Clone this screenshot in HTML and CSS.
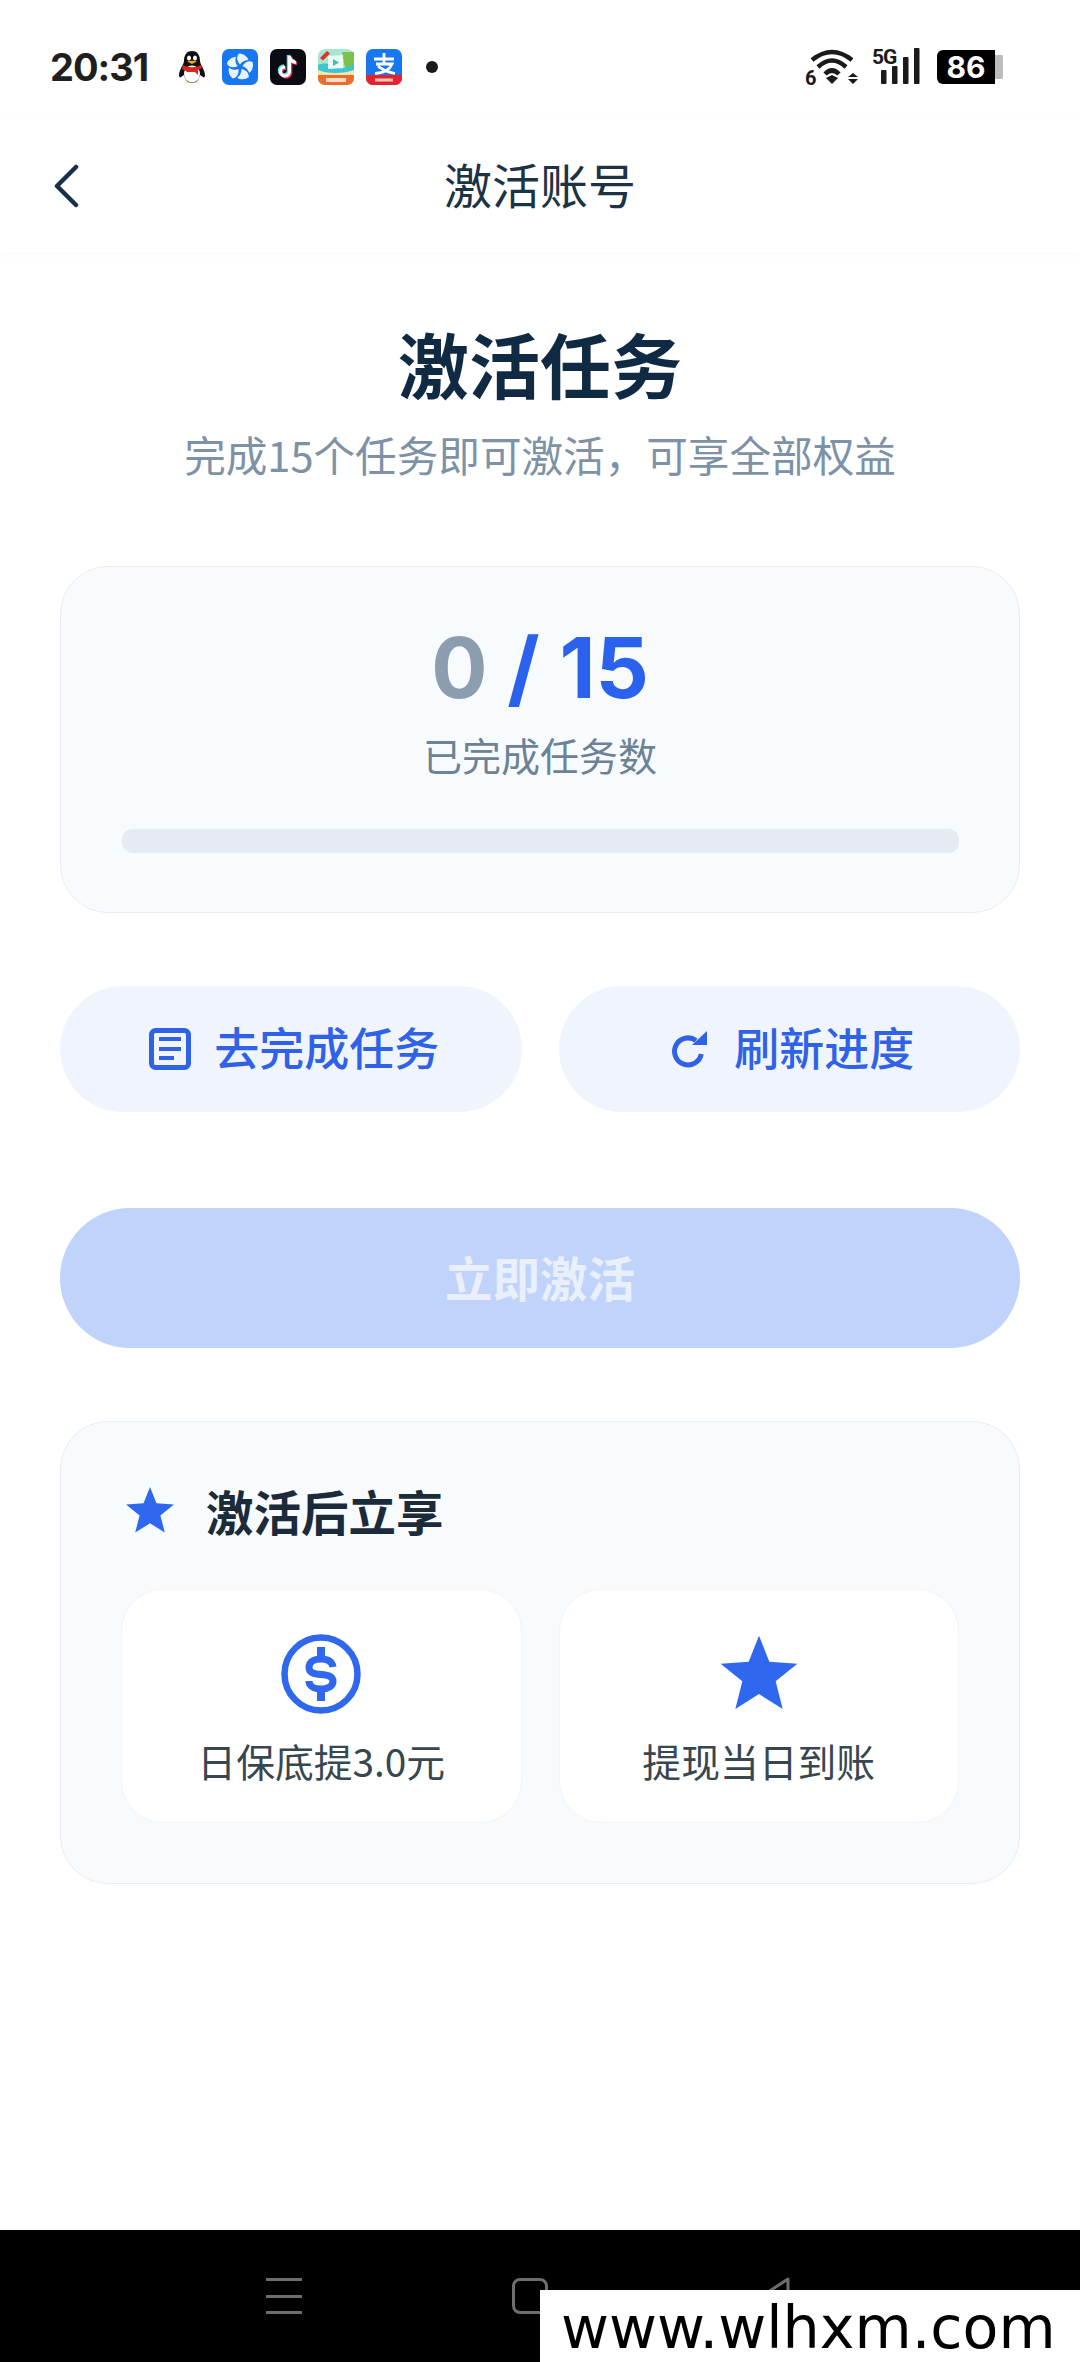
FILE: index.html
```html
<!DOCTYPE html>
<html lang="zh-CN">
<head>
  <meta charset="UTF-8">
  <meta name="viewport" content="width=device-width, initial-scale=1.0">
  <title>激活账号</title>
  <link rel="stylesheet" href="styles.css">
</head>
<body>
  <div class="screen">
    <div class="status-bar">
      <span class="clock">20:31</span>
      <div class="app-icons">
        <svg class="penguin" viewBox="0 0 28 34">
          <path d="M14 1C8 1 6 6 6 11c0 3-5 9-5 14 0 2 1 3 2 2l3-2c1 5 4 8 8 8s7-3 8-8l3 2c1 1 2 0 2-2 0-5-5-11-5-14C22 6 20 1 14 1z" fill="#111"/>
          <ellipse cx="14" cy="24" rx="8" ry="8.500" fill="#fff"/>
          <path d="M5 15c6 3 12 3 18 0l1 3-4 2v5l-3-3H9l-1-1-4-2z" fill="#d6261f"/>
          <ellipse cx="11" cy="8" rx="2" ry="2.600" fill="#fff"/>
          <ellipse cx="17" cy="8" rx="2" ry="2.600" fill="#fff"/>
          <path d="M9 11.500c3-1 7-1 10 0l-5 2.500z" fill="#f5a623"/>
          <path d="M7 33c2-1 5-1 7 0 2-1 5-1 7 0z" fill="#f5b942"/>
        </svg>
        <svg class="app-icon" viewBox="0 0 36 36">
          <rect width="36" height="36" rx="7" fill="#1677f0"/>
          <g fill="#e6f4ff">
            <path id="blade" d="M18 15.500C15 12 14 8 17 4.500c4 0 8 2.500 9.500 6.500-3.500 0-6.500 1.500-8.500 4.500z"/>
            <use href="#blade" transform="rotate(72 18 18)"/>
            <use href="#blade" transform="rotate(144 18 18)"/>
            <use href="#blade" transform="rotate(216 18 18)"/>
            <use href="#blade" transform="rotate(288 18 18)"/>
          </g>
        </svg>
        <svg class="app-icon" viewBox="0 0 36 36">
          <rect width="36" height="36" rx="7" fill="#0b0b14"/>
          <path d="M19.500 7v15.500a4.500 4.500 0 1 1-4.500-4.500M19.500 7c.5 3.500 3 6 6.500 6.500" fill="none" stroke="#ff2d55" stroke-width="3.500" transform="translate(1 1)"/>
          <path d="M19.500 7v15.500a4.500 4.500 0 1 1-4.500-4.500M19.500 7c.5 3.500 3 6 6.500 6.500" fill="none" stroke="#5fe3ea" stroke-width="3.500" transform="translate(-1 -1)"/>
          <path d="M19.500 7v15.500a4.500 4.500 0 1 1-4.500-4.500M19.500 7c.5 3.500 3 6 6.500 6.500" fill="none" stroke="#fff" stroke-width="3"/>
        </svg>
        <svg class="app-icon" viewBox="0 0 36 36">
          <rect width="36" height="36" rx="7" fill="#a9e6d2"/>
          <path d="M24 3h12v16h-9z" fill="#7cc24a"/>
          <path d="M0 16c8-3 14-1 18 2s12 1 18-3v9H0z" fill="#3fc3d6"/>
          <path d="M10 7l15-1v13l-15 1z" fill="#e8fbf5"/>
          <path d="M15 10l6 3.500-6 3.500z" fill="#45bcae"/>
          <path d="M0 21c8 4 26 4 36 0v6H0z" fill="#f8e7a0"/>
          <path d="M0 26h36v3a7 7 0 0 1-7 7H7a7 7 0 0 1-7-7z" fill="#ee6b2f"/>
          <rect x="8" y="29" width="20" height="4" fill="#ffdcc0"/>
          <path d="M2 9L9 2l3 2.500-7 7z" fill="#d8322a"/>
        </svg>
        <svg class="app-icon" viewBox="0 0 36 36">
          <rect width="36" height="36" rx="7" fill="#1677f0"/>
          <path d="M0 26h36v3a7 7 0 0 1-7 7H7a7 7 0 0 1-7-7z" fill="#e8202a"/>
          <rect x="9" y="29.500" width="18" height="3" fill="#ffc9c2"/>
          <path d="M8 10h20M18 4v10M10 15h16c-2 5-8 9-17 9.500M12 17c4 4 10 6 17 7.500" fill="none" stroke="#fff" stroke-width="2.800"/>
        </svg>
        <span class="dot"></span>
      </div>
      <div class="sys-icons">
        <div class="wifi">
          <svg class="wifi-arcs" viewBox="0 0 56 38">
            <path d="M7 12Q27-4 47 12" fill="none" stroke="#1a1a1a" stroke-width="4.500"/>
            <path d="M13 19Q27 6 41 19" fill="none" stroke="#1a1a1a" stroke-width="4.500"/>
            <path d="M20 26Q27 19 34 26" fill="none" stroke="#1a1a1a" stroke-width="4.500"/>
            <path d="M21 30l6-3 6 3-6 6z" fill="#1a1a1a"/>
            <path d="M43 29l5-4 5 4zM43 31h10l-5 5z" fill="#1a1a1a"/>
          </svg>
          <span class="wifi-six">6</span>
        </div>
        <div class="signal">
          <span class="five-g">5G</span>
          <svg class="signal-bars" viewBox="0 0 39 36">
            <rect x="0" y="22" width="5.500" height="14" rx="1"/>
            <rect x="11" y="18" width="5.500" height="18" rx="1"/>
            <rect x="22" y="9" width="5.500" height="27" rx="1"/>
            <rect x="33" y="0" width="5.500" height="36" rx="1"/>
          </svg>
        </div>
        <div class="battery">
          <span class="battery-level">86</span>
          <span class="battery-tip"></span>
        </div>
      </div>
    </div>

    <header class="nav-bar">
      <svg class="back" viewBox="0 0 26 44">
        <path d="M23 3L4 22l19 19" fill="none" stroke="#16304a" stroke-width="4.500" stroke-linecap="round" stroke-linejoin="round"/>
      </svg>
      <h2 class="nav-title">激活账号</h2>
    </header>

    <main class="content">
      <h1 class="title">激活任务</h1>
      <p class="subtitle">完成15个任务即可激活，可享全部权益</p>

      <section class="card progress-card">
        <div class="count"><span class="count-done">0</span> / 15</div>
        <div class="count-label">已完成任务数</div>
        <div class="progress-track"></div>
      </section>

      <div class="actions">
        <div class="btn-soft btn-tasks">
          <svg class="btn-icon" viewBox="0 0 42 42">
            <rect x="2.500" y="2.500" width="37" height="37" rx="4" fill="none" stroke="#2f62e6" stroke-width="5"/>
            <path d="M10 11h22M10 21h22M10 30h15" stroke="#2f62e6" stroke-width="4"/>
          </svg>
          <span>去完成任务</span>
        </div>
        <div class="btn-soft btn-refresh">
          <svg class="btn-icon refresh" viewBox="0 0 38 38">
            <path d="M25 10.500A13.500 13.500 0 1 0 30.300 24" fill="none" stroke="#2f62e6" stroke-width="5"/>
            <path d="M36 1v14H21z" fill="#2f62e6"/>
          </svg>
          <span>刷新进度</span>
        </div>
      </div>

      <div class="btn-activate">立即激活</div>

      <section class="card benefits">
        <div class="benefits-head">
          <svg class="star-small" viewBox="0 0 24 24"><path d="M12 1l3.100 7.700 8.400.6-6.500 5.300 2.100 8.200L12 18.400 4.900 22.800 7 14.600.500 9.300l8.400-.6z"/></svg>
          <span>激活后立享</span>
        </div>
        <div class="benefit-grid">
          <div class="benefit">
            <svg class="benefit-icon" viewBox="0 0 80 80">
              <circle cx="40" cy="40" r="36.500" fill="none" stroke="#2f67ef" stroke-width="6.500"/>
              <path d="M52 33C51 27 46 25 40 25 33 25 28 28 28 33.500 28 45 52 36 52 47.500 52 52 47 55 40 55 33 55 28 52 28 47" fill="none" stroke="#2f67ef" stroke-width="7"/>
              <path d="M40 13v10M40 57v10" stroke="#2f67ef" stroke-width="8"/>
            </svg>
            <span class="benefit-text">日保底提3.0元</span>
          </div>
          <div class="benefit">
            <svg class="benefit-icon" viewBox="0 0 24 24"><path d="M12 .500l3.100 7.800 8.400.6-6.500 5.300 2.100 8.300L12 18l-7.100 4.500L7 14.200.500 8.900l8.400-.6z"/></svg>
            <span class="benefit-text">提现当日到账</span>
          </div>
        </div>
      </section>
    </main>

    <nav class="sys-nav">
      <div class="nav-menu"><span></span><span></span><span></span></div>
      <span class="nav-home"></span>
      <svg class="nav-back" viewBox="0 0 34 40"><path d="M30 3L4 20l26 17z" fill="none" stroke="#6e6e6e" stroke-width="3" stroke-linejoin="round"/></svg>
    </nav>

    <div class="watermark">www.wlhxm.com</div>
  </div>
</body>
</html>
```

FILE: styles.css
```css
html, body {
  margin: 0;
  padding: 0;
  background-color: #fff;
  font-family: "Noto Sans CJK SC", "Noto Sans", sans-serif;
}

.screen {
  position: relative;
  width: 1080px;
  height: 2362px;
  overflow: hidden;
  display: flex;
  flex-direction: column;
}

/* status bar */
.status-bar {
  height: 120px;
  flex-shrink: 0;
  display: flex;
  align-items: flex-start;
  padding: 48px 0 0 50px;
  box-sizing: border-box;
}

.clock {
  width: 122px;
  font-family: Inter, sans-serif;
  font-size: 38px;
  font-weight: 700;
  line-height: 38px;
  color: #1f1f1f;
  letter-spacing: -1px;
}

.app-icons {
  display: flex;
  align-items: center;
  height: 37px;
  gap: 12px;
}

.penguin {
  width: 28px;
  height: 34px;
  margin: 0 4px 0 6px;
}

.app-icon {
  width: 36px;
  height: 36px;
}

.dot {
  width: 12px;
  height: 12px;
  margin-left: 12px;
  border-radius: 50%;
  background-color: #1a1a1a;
}

.sys-icons {
  margin-left: auto;
  margin-right: 77px;
  display: flex;
  align-items: flex-start;
}

.wifi {
  position: relative;
  width: 56px;
  height: 38px;
}

.wifi-arcs {
  display: block;
  width: 56px;
  height: 38px;
}

.wifi-six {
  position: absolute;
  left: 0;
  top: 21px;
  font-family: Roboto, sans-serif;
  font-size: 20px;
  font-weight: 700;
  line-height: 19px;
  color: #1a1a1a;
}

.signal {
  position: relative;
  width: 48px;
  height: 36px;
  margin-left: 11px;
  display: flex;
  justify-content: flex-end;
}

.five-g {
  position: absolute;
  left: 0;
  top: -1px;
  font-family: Roboto, sans-serif;
  font-size: 21px;
  font-weight: 700;
  line-height: 20px;
  letter-spacing: -1px;
  color: #1a1a1a;
}

.signal-bars {
  width: 39px;
  height: 36px;
  fill: #1a1a1a;
}

.battery {
  display: flex;
  align-items: center;
  margin-left: 17px;
  margin-top: 2px;
}

.battery-level {
  width: 58px;
  height: 34px;
  border-radius: 6px 0 0 6px;
  background-color: #000;
  color: #fff;
  font-family: Inter, sans-serif;
  font-size: 30px;
  font-weight: 700;
  line-height: 34px;
  text-align: center;
}

.battery-tip {
  width: 8px;
  height: 34px;
  border-radius: 0 8px 8px 0;
  background-color: #bdbdbd;
  clip-path: inset(5px 0);
}

/* title bar */
.nav-bar {
  position: relative;
  height: 132px;
  flex-shrink: 0;
  display: flex;
  align-items: center;
  justify-content: center;
  box-shadow: 0 2px 10px rgba(30, 50, 90, 0.025);
}

.back {
  position: absolute;
  left: 53px;
  top: 44px;
  width: 26px;
  height: 44px;
}

.nav-title {
  margin: 0 0 6px 0;
  font-size: 48px;
  font-weight: 400;
  line-height: 66px;
  color: #1c3345;
}

/* page body */
.content {
  flex: 1;
  display: flex;
  flex-direction: column;
  padding: 0 60px;
}

.title {
  margin: 67px 0 0 0;
  font-size: 71px;
  font-weight: 700;
  line-height: 86px;
  text-align: center;
  color: #102a43;
}

.subtitle {
  margin: 21px 0 0 0;
  font-size: 41.600px;
  line-height: 56px;
  text-align: center;
  color: #7d92a6;
}

.card {
  box-sizing: border-box;
  border: 1.500px solid #e9edf3;
  border-radius: 48px;
  background-color: #f8fbfe;
}

.progress-card {
  height: 347px;
  margin-top: 84px;
  padding: 51px 60.500px 0 60.500px;
  text-align: center;
}

.count {
  font-family: Inter, sans-serif;
  font-size: 83.500px;
  font-weight: 700;
  line-height: 100px;
  color: #2a62ee;
}

.count-done {
  color: #8d9db0;
}

.count-label {
  margin-top: 9px;
  font-size: 39px;
  line-height: 54px;
  color: #6c8296;
}

.progress-track {
  height: 24px;
  margin-top: 48px;
  border-radius: 10px;
  background-color: #e6eaf2;
}

.actions {
  margin-top: 73px;
  display: grid;
  grid-template-columns: 1fr 1fr;
  gap: 37px;
}

.btn-soft {
  box-sizing: border-box;
  height: 126px;
  border-radius: 63px;
  background-color: #eff4fd;
  display: flex;
  align-items: center;
  justify-content: center;
  gap: 23px;
  font-size: 45px;
  font-weight: 500;
  color: #2f62e6;
}

.btn-soft span {
  margin-bottom: 6px;
}

.btn-tasks {
  padding-left: 7px;
}

.btn-refresh {
  gap: 25px;
  padding-left: 7px;
}

.btn-icon {
  width: 42px;
  height: 42px;
}

.btn-icon.refresh {
  width: 38px;
  height: 38px;
}

.btn-activate {
  box-sizing: border-box;
  height: 140px;
  margin-top: 96px;
  padding-bottom: 3px;
  border-radius: 70px;
  background-color: #c0d3fb;
  display: flex;
  align-items: center;
  justify-content: center;
  font-size: 47.500px;
  font-weight: 700;
  color: #e9effb;
}

.benefits {
  height: 463px;
  margin-top: 73px;
  padding: 0 60px;
}

.benefits-head {
  height: 167px;
  display: flex;
  align-items: center;
  gap: 31px;
  padding: 9px 0 0 4px;
  box-sizing: border-box;
  font-size: 47.500px;
  font-weight: 700;
  color: #1c2b3a;
}

.star-small {
  width: 50px;
  height: 50px;
  fill: #2f67ef;
}

.benefit-grid {
  display: grid;
  grid-template-columns: 1fr 1fr;
  gap: 37px;
}

.benefit {
  box-sizing: border-box;
  height: 234px;
  padding-top: 44px;
  border: 1.500px solid #f1f4f8;
  border-radius: 42px;
  background-color: #fff;
  display: flex;
  flex-direction: column;
  align-items: center;
}

.benefit-icon {
  width: 80px;
  height: 80px;
  fill: #2f67ef;
}

.benefit-text {
  margin-top: 19px;
  font-size: 38.800px;
  line-height: 54px;
  color: #37474f;
}

/* android nav */
.sys-nav {
  position: relative;
  height: 132px;
  flex-shrink: 0;
  background-color: #000;
}

.nav-menu {
  position: absolute;
  left: 266px;
  top: 48px;
  width: 36px;
  height: 36px;
  display: flex;
  flex-direction: column;
  justify-content: space-between;
}

.nav-menu span {
  height: 3px;
  background-color: #6e6e6e;
}

.nav-home {
  position: absolute;
  left: 512px;
  top: 48px;
  box-sizing: border-box;
  width: 36px;
  height: 36px;
  border: 3px solid #6e6e6e;
  border-radius: 8px;
}

.nav-back {
  position: absolute;
  left: 758px;
  top: 46px;
  width: 34px;
  height: 40px;
}

.watermark {
  position: absolute;
  right: 0;
  bottom: 0;
  width: 540px;
  height: 72px;
  padding-left: 21px;
  box-sizing: border-box;
  background-color: #fff;
  font-family: "DejaVu Sans", sans-serif;
  font-size: 58.700px;
  line-height: 76px;
  color: #000;
}
```
